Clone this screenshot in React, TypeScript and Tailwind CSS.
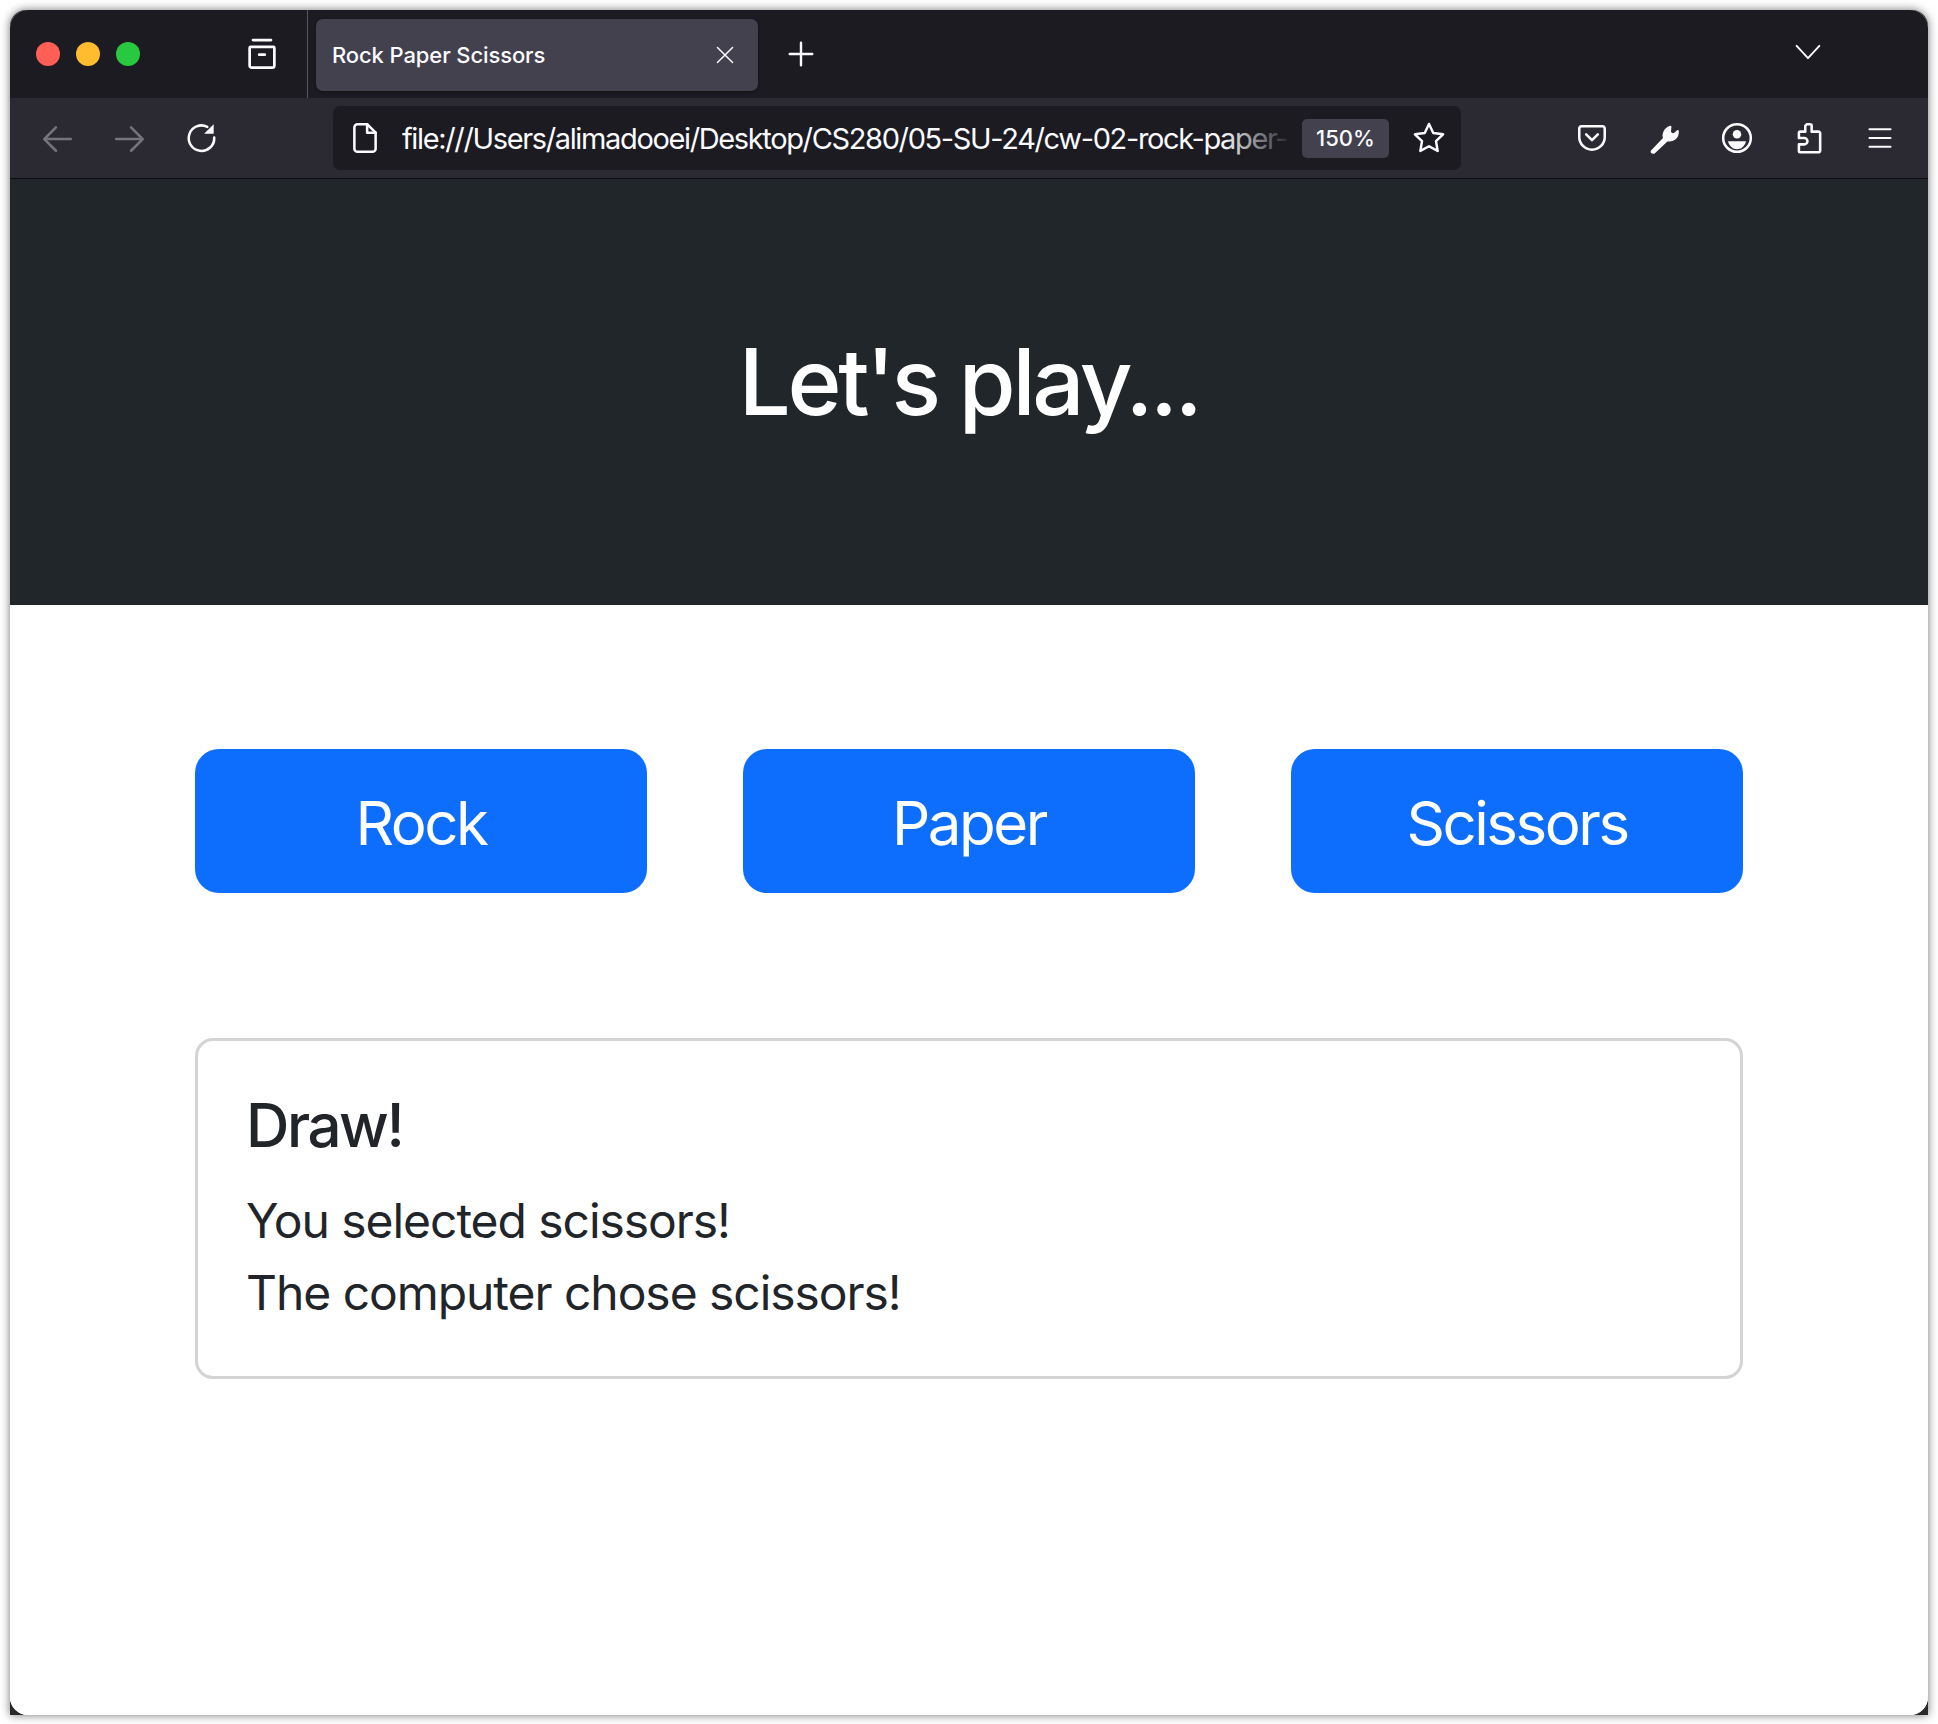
import React from "react";

const font = "font-['Inter','Liberation_Sans',sans-serif]";

function TrafficLights() {
  return (
    <div className="flex items-center gap-[16px]">
      <span className="w-[24px] h-[24px] rounded-full bg-[#ff5f57]" />
      <span className="w-[24px] h-[24px] rounded-full bg-[#febc2e]" />
      <span className="w-[24px] h-[24px] rounded-full bg-[#28c840]" />
    </div>
  );
}

function Icon({ size, stroke = "#fbfbfe", width = 2.4, children }: { size: number; stroke?: string; width?: number; children: React.ReactNode }) {
  return (
    <svg width={size} height={size} viewBox="0 0 32 32" fill="none" stroke={stroke} strokeWidth={width} strokeLinecap="round" strokeLinejoin="round" className="shrink-0">
      {children}
    </svg>
  );
}

export default function App() {
  return (
    <div className={`${font} w-[1938px] h-[1724px] bg-white pt-[10px] pl-[10px]`}>
      <div className="w-[1918px] h-[1705px] bg-[#2a2a2a] shadow-[0_0_10px_rgba(0,0,0,0.55)] rounded-t-[16px]">
        <div className="w-full h-full rounded-[18px] overflow-hidden flex flex-col bg-white">
          {/* tab strip */}
          <div className="h-[88px] shrink-0 bg-[#1c1b22] flex items-center relative">
            <div className="ml-[26px] mb-[1px]"><TrafficLights /></div>
            <div className="ml-[104px] mb-[2px]">
              <Icon size={36}>
                <path d="M6 10.5h20a1 1 0 0 1 1 1V27a2 2 0 0 1-2 2H7a2 2 0 0 1-2-2V11.5a1 1 0 0 1 1-1z" />
                <path d="M8 4.5h16" />
                <path d="M13.5 17.5h5" />
              </Icon>
            </div>
            <div className="ml-[27px] w-px h-full bg-[#55555c]" />
            <div className="ml-[8px] w-[442px] h-[72px] mt-[1px] rounded-[7px] bg-[#42414d] flex items-center pl-[16px] pr-[22px] justify-between shadow-[0_1px_3px_rgba(0,0,0,0.4)]">
              <span className="text-[22px] font-medium text-[#fbfbfe] whitespace-nowrap tracking-[-0.005em] mt-[2px]">Rock Paper Scissors</span>
              <Icon size={22} width={2.2}><path d="M5 5l22 22M27 5L5 27" /></Icon>
            </div>
            <div className="ml-[28px]">
              <Icon size={30} width={2.6}><path d="M16 4v24M4 16h24" /></Icon>
            </div>
            <div className="ml-auto mr-[106px] mb-[4px]">
              <Icon size={28} width={2.2}><path d="M3 9l13 14L29 9" /></Icon>
            </div>
          </div>

          {/* toolbar */}
          <div className="h-[81px] shrink-0 bg-[#2b2a33] border-b border-[#0e0e12] flex items-center">
            <div className="ml-[30px]">
              <Icon size={34} stroke="#75747c"><path d="M29 17H5M15 6L4 17l11 11" /></Icon>
            </div>
            <div className="ml-[39px]">
              <Icon size={34} stroke="#75747c"><path d="M3 17h24M17 6l11 11-11 11" /></Icon>
            </div>
            <div className="ml-[38px]">
              <Icon size={34}>
                <path d="M27.5 15.5A12 12 0 1 1 21 5.5" />
                <path d="M27 3v9h-9z" fill="#fbfbfe" stroke="none" />
              </Icon>
            </div>
            <div className="ml-[114px] w-[1128px] h-[64px] rounded-[7px] bg-[#1c1b22] flex items-center">
              <div className="ml-[15px]">
                <Icon size={34}>
                  <path d="M9 3h9l8 8v15a3 3 0 0 1-3 3H9a3 3 0 0 1-3-3V6a3 3 0 0 1 3-3z" />
                  <path d="M18 3v8h8" />
                </Icon>
              </div>
              <div className="ml-[20px] w-[890px] overflow-hidden relative">
                <span className="block text-[29px] tracking-[-0.047em] mt-[1px] text-[#fbfbfe] whitespace-nowrap">file:///Users/alimadooei/Desktop/CS280/05-SU-24/cw-02-rock-paper-</span>
                <span className="absolute right-0 top-0 bottom-0 w-[70px] bg-gradient-to-r from-transparent to-[#1c1b22]" />
              </div>
              <div className="ml-[10px] w-[87px] h-[39px] rounded-[5px] bg-[#42414d] flex items-center justify-center text-[22px] font-medium text-[#fbfbfe]">150%</div>
              <div className="ml-[22px]">
                <Icon size={36} width={2.2}>
                  <path d="M16 3.5l3.8 8 8.7 1.2-6.3 6 1.5 8.8L16 23.3l-7.7 4.200 1.5-8.800-6.300-6 8.700-1.200z" />
                </Icon>
              </div>
            </div>
            <div className="ml-[114px]">
              <Icon size={34}>
                <path d="M6.5 5h19A2.5 2.5 0 0 1 28 7.5V15a12 12 0 0 1-24 0V7.5A2.5 2.5 0 0 1 6.5 5z" />
                <path d="M10.5 12.5L16 18l5.5-5.500" />
              </Icon>
            </div>
            <div className="ml-[38px]">
              <Icon size={34} width={2}>
                <path d="M4.500 28.500L16 16.500c-1.500-4 .5-9 6-11l-.5 5.500 3.500 2 4-3.500c.5 6-5 10-10 8.500L7 29.500c-1 .7-3 .2-2.500-1z" fill="#fbfbfe" />
              </Icon>
            </div>
            <div className="ml-[39px]">
              <Icon size={34}>
                <circle cx="16" cy="16" r="13" />
                <circle cx="16" cy="12.500" r="4" fill="#fbfbfe" stroke="none" />
                <path d="M7.500 19h17c-1 4.500-4.500 7.500-8.500 7.500s-7.500-3-8.500-7.500z" fill="#fbfbfe" stroke="none" />
              </Icon>
            </div>
            <div className="ml-[38px]">
              <Icon size={34}>
                <path d="M14 3h3a1.500 1.500 0 0 1 1.500 1.500V10H25a1.500 1.500 0 0 1 1.500 1.500V28a1.500 1.500 0 0 1-1.500 1.500H7.500a1 1 0 0 1-1-1V22h5a3 3 0 0 0 0-6h-5v-4.500A1.500 1.500 0 0 1 8 10h4.500V4.500z" />
              </Icon>
            </div>
            <div className="ml-[40px]">
              <Icon size={28}><path d="M4 6h24M4 16h24M4 26h24" /></Icon>
            </div>
          </div>

          {/* page */}
          <div className="h-[426px] shrink-0 bg-[#202629] flex items-center justify-center pb-[19px]">
            <h1 className="text-[92px] font-medium text-white leading-[1.2] tracking-[-0.036em]">Let's play...</h1>
          </div>
          <div className="flex-1 bg-white px-[185px] pt-[144px]">
            <div className="grid grid-cols-3 gap-[96px]">
              {["Rock", "Paper", "Scissors"].map((label) => (
                <button key={label} className="h-[144px] rounded-[24px] bg-[#0d6efd] text-white text-[60px] tracking-[-0.041em] pt-[3px] flex items-center justify-center">
                  {label}
                </button>
              ))}
            </div>
            <div className="mt-[145px] h-[341px] border-[3px] border-[#d4d4d4] rounded-[18px] px-[48px] pt-[48px]">
              <h5 className="text-[60px] font-medium text-[#212529] leading-[72px] tracking-[-0.04em]">Draw!</h5>
              <p className="mt-[24px] text-[48px] text-[#212529] leading-[72px] tracking-[-0.022em]">You selected scissors!</p>
              <p className="text-[48px] text-[#212529] leading-[72px] tracking-[-0.022em]">The computer chose scissors!</p>
            </div>
          </div>
        </div>
      </div>
    </div>
  );
}
